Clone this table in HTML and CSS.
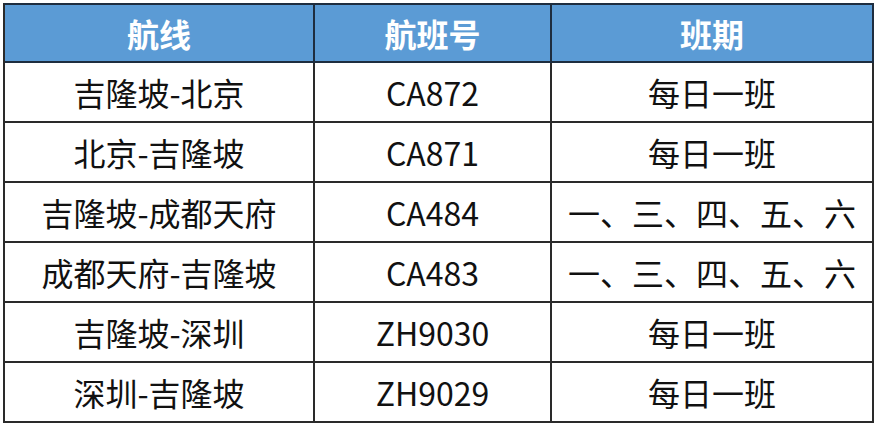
FILE: index.html
```html
<!DOCTYPE html>
<html lang="zh-CN">
<head>
<meta charset="utf-8">
<title>航班时刻</title>
<link rel="stylesheet" href="styles.css">
</head>
<body>
<table class="flights">
  <colgroup>
    <col class="c-route">
    <col class="c-no">
    <col class="c-days">
  </colgroup>
  <thead>
    <tr class="head">
      <th>航线</th>
      <th>航班号</th>
      <th>班期</th>
    </tr>
  </thead>
  <tbody>
    <tr><td>吉隆坡-北京</td><td>CA872</td><td>每日一班</td></tr>
    <tr><td>北京-吉隆坡</td><td>CA871</td><td>每日一班</td></tr>
    <tr><td>吉隆坡-成都天府</td><td>CA484</td><td>一、三、四、五、六</td></tr>
    <tr><td>成都天府-吉隆坡</td><td>CA483</td><td>一、三、四、五、六</td></tr>
    <tr><td>吉隆坡-深圳</td><td>ZH9030</td><td>每日一班</td></tr>
    <tr><td>深圳-吉隆坡</td><td>ZH9029</td><td>每日一班</td></tr>
  </tbody>
</table>
</body>
</html>
```

FILE: styles.css
```css
html, body {
  margin: 0;
  padding: 0;
  background: #ffffff;
}

.flights {
  margin: 3px 0 0 3px;
  width: 871px;
  table-layout: fixed;
  border-collapse: separate;
  border-spacing: 0;
  border-top: 2px solid #1e2d3f;
  border-left: 2px solid #2a2a2a;
  font-family: "Noto Sans CJK SC", "Noto Sans", sans-serif;
  font-size: 32px;
  line-height: 1;
  color: #111111;
}

.c-route { width: 310px; }
.c-no { width: 237px; }
.c-days { width: 322px; }

.flights th,
.flights td {
  box-sizing: border-box;
  padding: 0;
  text-align: center;
  vertical-align: middle;
  border-right: 2px solid #2a2a2a;
  border-bottom: 2px solid #2a2a2a;
  white-space: nowrap;
}

.flights th {
  height: 58px;
  background: #5b9bd5;
  color: #ffffff;
  font-weight: 700;
  border-right-color: #1e2d3f;
  border-bottom-color: #1e2d3f;
}

.flights td {
  height: 60px;
  font-weight: 400;
}
```
